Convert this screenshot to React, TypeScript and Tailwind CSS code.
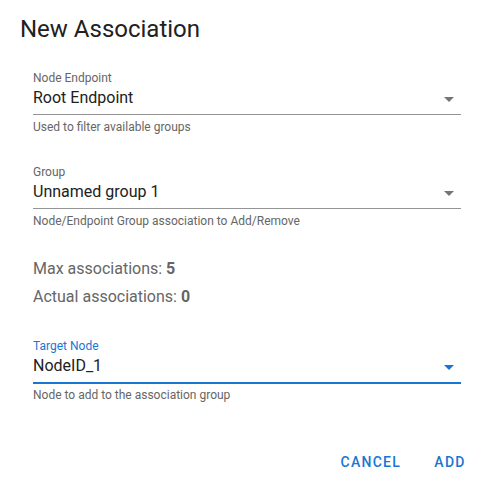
import React from 'react';

type FieldProps = {
  label: string;
  value: string;
  hint: string;
  focused?: boolean;
};

function Caret({ color }: { color: string }) {
  return (
    <svg width="10" height="5" viewBox="0 0 10 5" className="shrink-0">
      <polygon points="0,0 10,0 5,5" fill={color} />
    </svg>
  );
}

function SelectField({ label, value, hint, focused }: FieldProps) {
  return (
    <div className="flex flex-col">
      <div
        className={`text-[12px] leading-[16px] ${focused ? 'text-[#1976d2]' : 'text-[#666666]'}`}
      >
        {label}
      </div>
      <div
        className={`flex items-center pb-[4px] ${
          focused ? 'border-b-2 border-[#1976d2]' : 'border-b border-[#949494]'
        }`}
      >
        <div className="flex-1 text-[16px] leading-[24px] text-[#212121]">{value}</div>
        <div className="mr-[7px] mt-[3px] flex">
          <Caret color={focused ? '#1976d2' : '#757575'} />
        </div>
      </div>
      <div className={`text-[12px] leading-[16px] text-[#666666] ${focused ? 'mt-[3px]' : 'mt-[4px]'}`}>
        {hint}
      </div>
    </div>
  );
}

export default function App() {
  return (
    <div
      className="flex h-[481px] w-full flex-col bg-white"
      style={{ fontFamily: 'Roboto, "Liberation Sans", sans-serif' }}
    >
      {/* Title */}
      <div className="pl-5 pt-[13px] text-[24px] leading-[32px] text-[#212121]">New Association</div>

      {/* Content */}
      <div className="flex flex-col pl-[33px] pr-[31px] pt-[25px]">
        <SelectField
          label="Node Endpoint"
          value="Root Endpoint"
          hint="Used to filter available groups"
        />
        <div className="mt-[29px]">
          <SelectField
            label="Group"
            value="Unnamed group 1"
            hint="Node/Endpoint Group association to Add/Remove"
          />
        </div>

        <div className="mt-[26px] flex flex-col text-[16px] leading-[28px] text-[#666666]">
          <div>
            Max associations: <span className="font-bold">5</span>
          </div>
          <div>
            Actual associations: <span className="font-bold">0</span>
          </div>
        </div>

        <div className="mt-[27px]">
          <SelectField
            label="Target Node"
            value="NodeID_1"
            hint="Node to add to the association group"
            focused
          />
        </div>
      </div>

      {/* Actions */}
      <div className="mt-auto flex justify-end gap-[9px] pb-[1px] pr-[10px]">
        <button className="h-[36px] min-w-[64px] px-2 text-[14px] font-medium uppercase tracking-[1.25px] text-[#1976d2]">
          Cancel
        </button>
        <button className="h-[36px] min-w-[64px] px-2 text-[14px] font-medium uppercase tracking-[1.25px] text-[#1976d2]">
          Add
        </button>
      </div>
    </div>
  );
}
